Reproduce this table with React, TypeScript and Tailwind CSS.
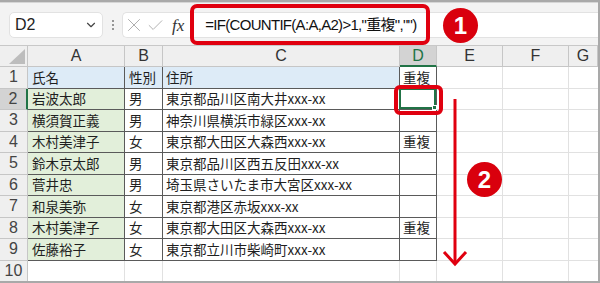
import { ChevronDown, X, Check } from 'lucide-react';

const cols = ['A', 'B', 'C', 'D', 'E', 'F', 'G'];

const rows: { name: string; sex: string; addr: string; dup: string }[] = [
  { name: '氏名', sex: '性別', addr: '住所', dup: '重複' },
  { name: '岩波太郎', sex: '男', addr: '東京都品川区南大井xxx-xx', dup: '' },
  { name: '横須賀正義', sex: '男', addr: '神奈川県横浜市緑区xxx-xx', dup: '' },
  { name: '木村美津子', sex: '女', addr: '東京都大田区大森西xxx-xx', dup: '重複' },
  { name: '鈴木京太郎', sex: '男', addr: '東京都品川区西五反田xxx-xx', dup: '' },
  { name: '菅井忠', sex: '男', addr: '埼玉県さいたま市大宮区xxx-xx', dup: '' },
  { name: '和泉美弥', sex: '女', addr: '東京都港区赤坂xxx-xx', dup: '' },
  { name: '木村美津子', sex: '女', addr: '東京都大田区大森西xxx-xx', dup: '重複' },
  { name: '佐藤裕子', sex: '女', addr: '東京都立川市柴崎町xxx-xx', dup: '' },
];

const cellText = "text-[13.5px] text-[#1f1f1f] font-['Noto_Sans_CJK_JP',sans-serif] leading-none";

function Badge({ n }: { n: string }) {
  return (
    <div className="w-[35px] h-[35px] rounded-full bg-[#d9000d] flex items-center justify-center">
      <span className="text-white text-[24px] font-bold font-['Liberation_Sans',sans-serif] leading-none">{n}</span>
    </div>
  );
}

export default function App() {
  return (
    <div className="relative w-[600px] h-[283px] overflow-hidden bg-white border-t-2 border-r-2 border-b-2 border-[#a9a9a9] box-border">
      {/* formula bar */}
      <div className="h-[43px] bg-[#f3f3f3] border-t border-[#d6d6d6] flex items-start pt-[9px]">
        <div className="ml-[9px] w-[94px] h-[26px] bg-white border border-[#e2e2e2] rounded-[5px] flex items-center justify-between pl-[5px] pr-[4px]">
          <span className="text-[16px] text-[#222] font-['Liberation_Sans',sans-serif]">D2</span>
          <ChevronDown className="w-[14px] h-[14px] text-[#444]" strokeWidth={2} />
        </div>
        <div className="w-[19px] h-[26px] flex flex-col items-center justify-center gap-[2px]">
          <span className="w-[2px] h-[2px] bg-[#777] rounded-full" />
          <span className="w-[2px] h-[2px] bg-[#777] rounded-full" />
          <span className="w-[2px] h-[2px] bg-[#777] rounded-full" />
        </div>
        <div className="flex-1 h-[26px] bg-white border border-r-0 border-[#e2e2e2] rounded-l-[5px] flex items-center">
          <X className="w-[22px] h-[22px] text-[#a6a6a6]" strokeWidth={1} />
          <Check className="ml-[1px] w-[19px] h-[19px] text-[#a6a6a6]" strokeWidth={1.1} />
          <span className="ml-[7px] text-[17px] italic text-[#333] font-['Liberation_Serif',serif] leading-none">fx</span>
          <span className="ml-[21px] text-[15px] tracking-[-0.7px] text-[#111] font-['Liberation_Sans','Noto_Sans_CJK_JP',sans-serif] whitespace-nowrap">
            =IF(COUNTIF(A:A,A2)&gt;1,"重複","")
          </span>
        </div>
      </div>

      {/* sheet */}
      <div className="grid grid-cols-[28px_97px_38px_237px_37px_66px_66px_1fr] grid-rows-[21px_repeat(10,21.5px)] border-t border-[#c8c8c8]">
        <div className="bg-[#efefef] border-r border-b border-[#c6c6c6] flex items-end justify-end p-[2px]">
          <div className="w-0 h-0 border-l-[16px] border-l-transparent border-b-[15px] border-b-[#bdbdbd]" />
        </div>
        {cols.map((c) =>
          c === 'D' ? (
            <div key={c} className="bg-[#d3d3d3] border-r border-[#c6c6c6] border-b-2 border-b-[#217346] flex items-center justify-center text-[16px] text-[#217346] font-['Liberation_Sans',sans-serif]">
              {c}
            </div>
          ) : (
            <div key={c} className="bg-[#efefef] border-r border-b border-[#c6c6c6] flex items-center justify-center text-[16px] text-[#333] font-['Liberation_Sans',sans-serif]">
              {c}
            </div>
          )
        )}

        {Array.from({ length: 10 }).map((_, i) => {
          const r = rows[i];
          const num = i + 1;
          const head = i === 0;
          return [
            <div
              key={`h${num}`}
              className={`${num === 2 ? 'bg-[#d3d3d3] border-r-2 border-r-[#217346]' : 'bg-[#efefef] border-r border-r-[#c6c6c6]'} border-b border-b-[#c6c6c6] flex items-center justify-center text-[16px] text-[#444] font-['Liberation_Sans',sans-serif]`}
            >
              {num}
            </div>,
            r ? (
              <div key={`a${num}`} className={`${head ? 'bg-[#ddebf7]' : 'bg-[#e2efda]'} border-r border-b border-[#5a5a5a] flex items-center pl-[4px] ${cellText}`}>
                {r.name}
              </div>
            ) : (
              <div key={`a${num}`} className="border-r border-b border-[#e1e1e1]" />
            ),
            r ? (
              <div key={`b${num}`} className={`${head ? 'bg-[#ddebf7]' : 'bg-white'} border-r border-b border-[#5a5a5a] flex items-center pl-[4px] ${cellText}`}>
                {r.sex}
              </div>
            ) : (
              <div key={`b${num}`} className="border-r border-b border-[#e1e1e1]" />
            ),
            r ? (
              <div key={`c${num}`} className={`${head ? 'bg-[#ddebf7]' : 'bg-white'} border-r border-b border-[#5a5a5a] flex items-center pl-[3px] whitespace-nowrap ${cellText}`}>
                {r.addr}
              </div>
            ) : (
              <div key={`c${num}`} className="border-r border-b border-[#e1e1e1]" />
            ),
            r ? (
              <div key={`d${num}`} className={`relative bg-white border-r border-b border-[#5a5a5a] flex items-center pl-[3px] ${cellText}`}>
                {r.dup}
                {num === 2 && (
                  <div className="absolute -left-px -top-px w-[calc(100%+1px)] h-[calc(100%+1px)] border-2 border-[#217346]">
                    <div className="absolute -right-[3px] -bottom-[3px] w-[5px] h-[5px] bg-[#217346] border border-white" />
                  </div>
                )}
              </div>
            ) : (
              <div key={`d${num}`} className="border-r border-b border-[#e1e1e1]" />
            ),
            <div key={`e${num}`} className="border-r border-b border-[#e1e1e1]" />,
            <div key={`f${num}`} className="border-r border-b border-[#e1e1e1]" />,
            <div key={`g${num}`} className="border-b border-[#e1e1e1]" />,
          ];
        })}
      </div>

      {/* annotations */}
      <div className="absolute left-[190px] top-[2px] w-[240px] h-[41px] border-4 border-[#e0000f] rounded-[7px]" />
      <div className="absolute left-[443px] top-[6px]">
        <Badge n="1" />
      </div>
      <div className="absolute left-[394px] top-[83px] w-[49px] h-[30px] border-4 border-[#e0000f] rounded-[6px]" />
      <svg className="absolute left-0 top-0" width="600" height="283" viewBox="0 0 600 283">
        <line x1="455" y1="97" x2="455" y2="262" stroke="#e0000f" strokeWidth="3" />
        <polyline points="444,250 455,262 466,250" fill="none" stroke="#e0000f" strokeWidth="3" />
      </svg>
      <div className="absolute left-[467px] top-[160px]">
        <Badge n="2" />
      </div>
    </div>
  );
}
